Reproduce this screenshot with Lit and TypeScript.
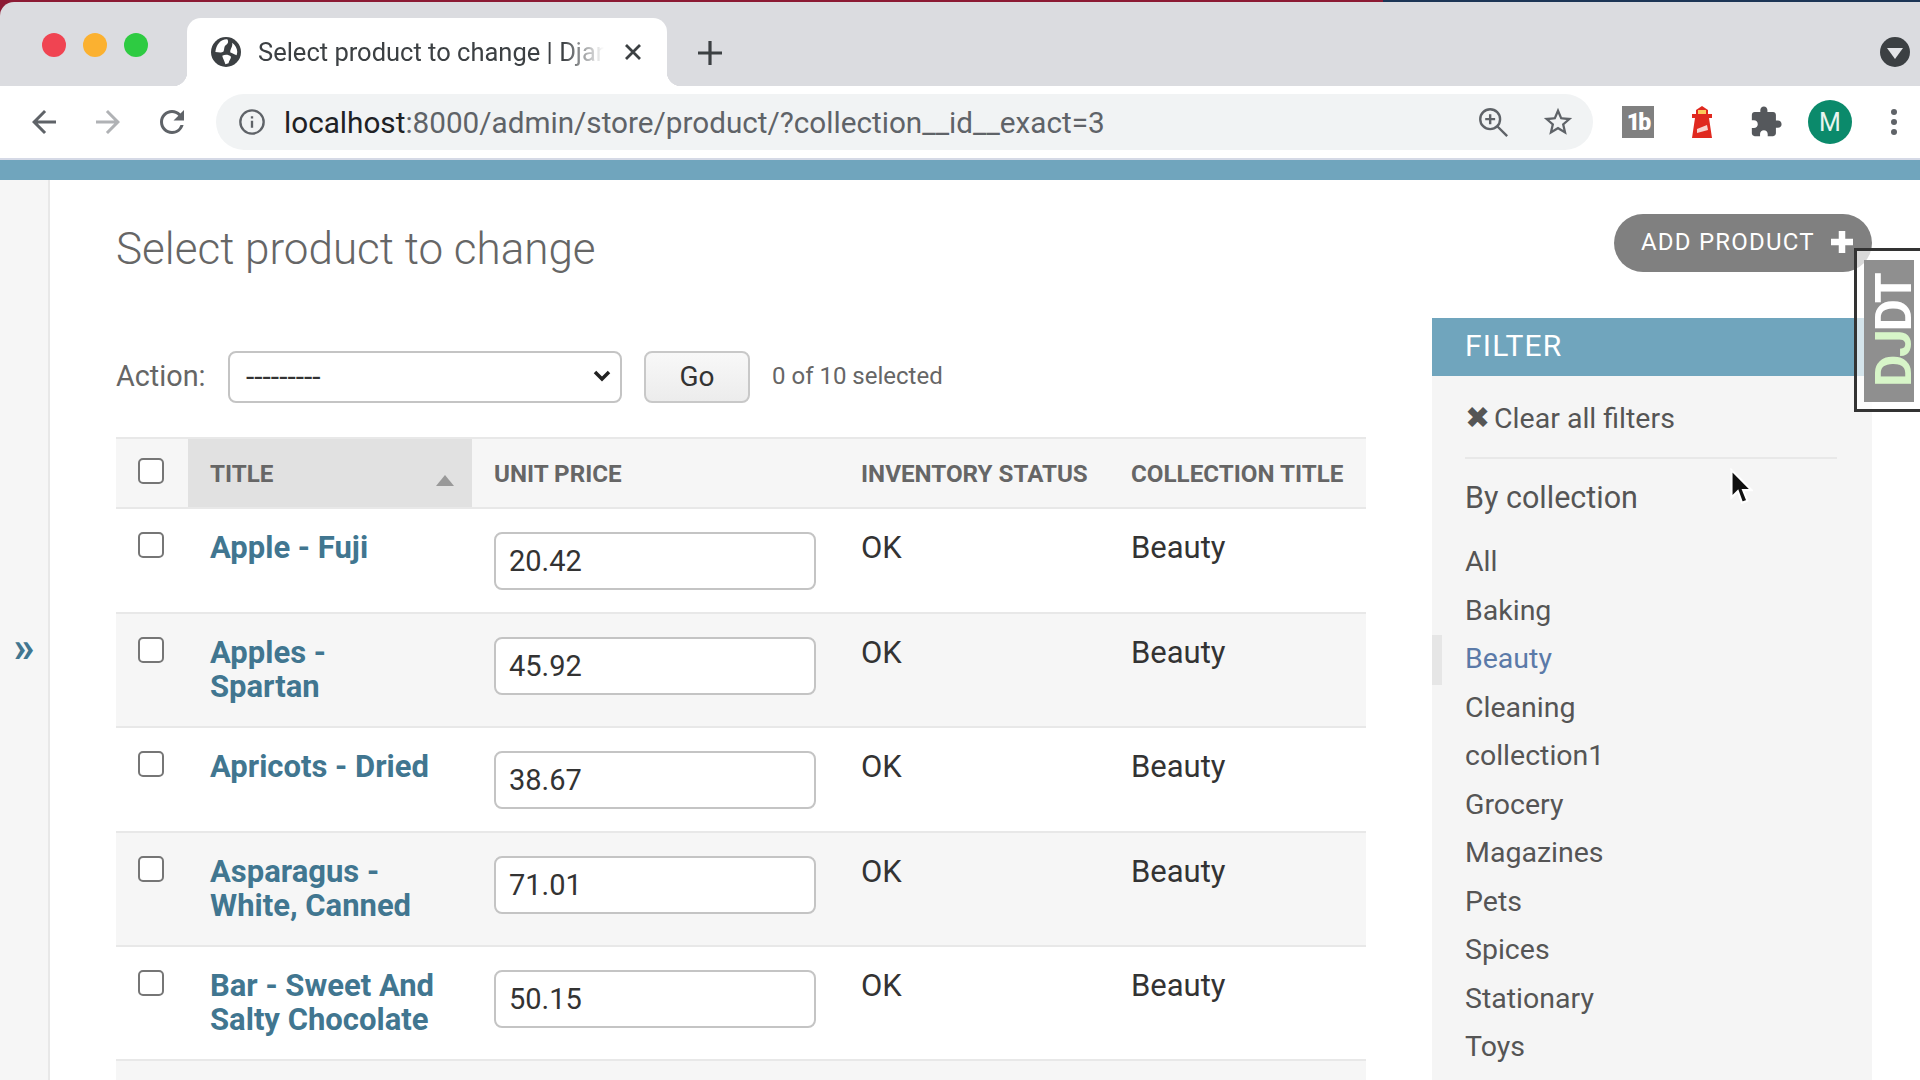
import { LitElement, html, css, svg } from 'lit';
import { customElement } from 'lit/decorators.js';

const PRODUCTS = [
  { title: 'Apple - Fuji', price: '20.42' },
  { title: 'Apples - Spartan', price: '45.92' },
  { title: 'Apricots - Dried', price: '38.67' },
  { title: 'Asparagus - White, Canned', price: '71.01' },
  { title: 'Bar - Sweet And Salty Chocolate', price: '50.15' },
  { title: '', price: '' },
];

const COLLECTIONS = [
  'All', 'Baking', 'Beauty', 'Cleaning', 'collection1', 'Grocery',
  'Magazines', 'Pets', 'Spices', 'Stationary', 'Toys',
];

const icon = (d: string, size: number, fill: string) => html`
  <svg width=${size} height=${size} viewBox="0 0 24 24" fill=${fill}>${svg`<path d=${d}></path>`}</svg>
`;

const BACK = 'M20 11H7.83l5.59-5.59L12 4l-8 8 8 8 1.41-1.41L7.83 13H20v-2z';
const FORWARD = 'M12 4l-1.41 1.41L16.17 11H4v2h12.17l-5.58 5.59L12 20l8-8z';
const RELOAD = 'M17.65 6.35A7.958 7.958 0 0 0 12 4c-4.42 0-7.99 3.58-7.99 8s3.57 8 7.99 8c3.73 0 6.84-2.55 7.73-6h-2.08A5.99 5.99 0 0 1 12 18c-3.31 0-6-2.69-6-6s2.69-6 6-6c1.66 0 3.14.69 4.22 1.78L13 11h7V4l-2.35 2.35z';
const STAR = 'M22 9.24l-7.19-.62L12 2 9.19 8.63 2 9.24l5.46 4.73L5.82 21 12 17.27 18.18 21l-1.63-7.03L22 9.24zM12 15.4l-3.76 2.27 1-4.28-3.32-2.88 4.38-.38L12 6.1l1.71 4.04 4.38.38-3.32 2.88 1 4.28L12 15.4z';
const PUZZLE = 'M20.5 11H19V7c0-1.1-.9-2-2-2h-4V3.5C13 2.12 11.88 1 10.5 1S8 2.12 8 3.5V5H4c-1.1 0-1.99.9-1.99 2v3.8H3.5c1.49 0 2.7 1.21 2.7 2.7s-1.21 2.7-2.7 2.7H2V20c0 1.1.9 2 2 2h3.8v-1.5c0-1.49 1.21-2.7 2.7-2.7 1.49 0 2.7 1.21 2.7 2.7V22H17c1.1 0 2-.9 2-2v-4h1.5c1.38 0 2.5-1.12 2.5-2.5S21.88 11 20.5 11z';

@customElement('app-root')
export class AppRoot extends LitElement {
  static styles = css`
    :host {
      display: block;
      width: 1920px;
      height: 1080px;
      overflow: hidden;
      position: relative;
      background: linear-gradient(to right, #8c1a34 1383px, #1b3556 1383px);
      font-family: Roboto, 'Liberation Sans', sans-serif;
      color: #333;
    }

    .tabstrip {
      height: 84px;
      margin-top: 2px;
      background: #dbdce0;
      border-top-left-radius: 14px;
      display: flex;
      align-items: flex-end;
    }

    .lights {
      width: 187px;
      height: 68px;
      flex: none;
      display: flex;
      gap: 17px;
      padding: 15px 0 0 42px;
      box-sizing: border-box;
    }

    .lights span {
      width: 24px;
      height: 24px;
      border-radius: 50%;
    }

    .tab {
      width: 480px;
      height: 68px;
      flex: none;
      position: relative;
      background: #fff;
      border-radius: 14px 14px 0 0;
      display: flex;
      align-items: center;
      padding: 0 22px 0 24px;
      box-sizing: border-box;
      gap: 17px;
      font-size: 25.5px;
      color: #3c4043;
    }

    .tab::before,
    .tab::after {
      content: '';
      position: absolute;
      bottom: 0;
      width: 14px;
      height: 14px;
    }

    .tab::before {
      left: -14px;
      background: radial-gradient(circle at 0 0, transparent 14px, #fff 14.5px);
    }

    .tab::after {
      right: -14px;
      background: radial-gradient(circle at 100% 0, transparent 14px, #fff 14.5px);
    }

    .tab-title {
      flex: 1;
      white-space: nowrap;
      overflow: hidden;
      -webkit-mask-image: linear-gradient(to right, #000 88%, transparent 100%);
      mask-image: linear-gradient(to right, #000 88%, transparent 100%);
    }

    .tab svg {
      flex: none;
    }

    .newtab {
      display: flex;
      margin: 0 0 17px 27px;
    }

    .strip-end {
      margin: 0 10px 19px auto;
      width: 30px;
      height: 30px;
      border-radius: 50%;
      background: #3c4043;
      display: flex;
      align-items: center;
      justify-content: center;
    }

    .strip-end i {
      border: 8px solid transparent;
      border-top: 11px solid #e4e5e8;
      border-bottom: 0;
      margin-top: 2px;
    }

    .toolbar {
      height: 72px;
      background: #fff;
      border-bottom: 2px solid #d5d9e6;
      display: flex;
      align-items: center;
      padding: 0 0 0 26px;
    }

    .nav {
      display: flex;
      width: 190px;
      flex: none;
      gap: 28px;
    }

    .omnibox {
      width: 1377px;
      height: 56px;
      flex: none;
      border-radius: 28px;
      background: #f1f3f4;
      display: flex;
      align-items: center;
      padding: 0 18px 0 22px;
      box-sizing: border-box;
      font-size: 29.7px;
      color: #5f6368;
    }

    .url {
      margin-left: 18px;
      flex: 1;
      white-space: nowrap;
    }

    .url b {
      font-weight: 400;
      color: #202124;
    }

    .omni-actions {
      display: flex;
      gap: 31px;
      align-items: center;
    }

    .extensions {
      display: flex;
      margin-left: 13px;
    }

    .ext {
      width: 64px;
      display: flex;
      align-items: center;
      justify-content: center;
    }

    .tb {
      width: 32px;
      height: 32px;
      background: #808080;
      color: #fff;
      font-size: 23px;
      font-weight: 900;
      letter-spacing: -2px;
      display: flex;
      align-items: center;
      justify-content: center;
    }

    .avatar {
      width: 44px;
      height: 44px;
      border-radius: 50%;
      background: #0b8a6b;
      color: #e8f5f0;
      font-size: 25px;
      display: flex;
      align-items: center;
      justify-content: center;
    }

    .dots {
      display: flex;
      flex-direction: column;
      gap: 4px;
    }

    .dots i {
      width: 6px;
      height: 6px;
      border-radius: 50%;
      background: #5f6368;
    }

    .site-header {
      height: 20px;
      background: #70a5bd;
    }

    .page {
      height: 900px;
      background: #fff;
      display: flex;
    }

    .nav-toggle {
      width: 48px;
      flex: none;
      border-right: 2px solid #e8e8e8;
      background: #f6f6f6;
      display: flex;
      align-items: center;
      justify-content: center;
      font-size: 42px;
      font-weight: 700;
      color: #417690;
    }

    .nav-toggle span {
      margin-top: 34px;
    }

    .content {
      flex: 1;
      padding: 34px 48px 0 66px;
      min-width: 0;
    }

    .content-head {
      height: 58px;
      display: flex;
      justify-content: space-between;
      margin-bottom: 46px;
    }

    h1 {
      margin: 0;
      font-weight: 300;
      font-size: 44px;
      line-height: 70px;
      color: #666;
    }

    .add-btn {
      width: 258px;
      height: 58px;
      border-radius: 29px;
      box-sizing: border-box;
      background: #808080;
      color: #fff;
      display: flex;
      align-items: center;
      padding: 0 0 2px 27px;
      gap: 15px;
      font-size: 24px;
      font-weight: 400;
      letter-spacing: 1.2px;
    }

    .columns {
      display: grid;
      grid-template-columns: 1250px 440px;
      column-gap: 66px;
    }

    .actions {
      height: 52px;
      margin: 33px 0 34px;
      display: flex;
      align-items: center;
    }

    .actions label {
      font-size: 28.8px;
      color: #666;
      width: 112px;
      padding-bottom: 2px;
    }

    .select-wrap {
      position: relative;
      width: 394px;
      height: 52px;
    }

    select {
      width: 100%;
      height: 100%;
      appearance: none;
      border: 2px solid #c4c4c4;
      border-radius: 8px;
      background: #fff;
      padding: 0 16px 2px;
      font: 400 30px Roboto, sans-serif;
      color: #333;
    }

    .select-wrap svg {
      position: absolute;
      right: 10px;
      top: 15px;
    }

    .go {
      width: 106px;
      height: 52px;
      margin: 0 22px;
      padding: 0 0 2px;
      border: 2px solid #c8c8c8;
      border-radius: 8px;
      background: linear-gradient(#f8f8f8, #ececec);
      font: 400 28px Roboto, sans-serif;
      color: #333;
    }

    .counter {
      font-size: 24px;
      color: #666;
      padding-bottom: 2px;
    }

    table {
      width: 1250px;
      table-layout: fixed;
      border-collapse: collapse;
    }

    th {
      height: 70px;
      padding: 2px 22px 0;
      box-sizing: border-box;
      text-align: left;
      background: #f6f6f6;
      border-top: 2px solid #e8e8e8;
      border-bottom: 2px solid #e8e8e8;
      font-size: 24.2px;
      font-weight: 700;
      color: #666;
      white-space: nowrap;
      position: relative;
    }

    th.sorted {
      background: #e1e1e1;
    }

    th.check {
      padding: 0 0 4px 22px;
    }

    .sort-arrow {
      position: absolute;
      right: 18px;
      top: 36px;
      border: 9px solid transparent;
      border-bottom: 11px solid #999;
      border-top: 0;
    }

    td {
      padding: 22px;
      vertical-align: top;
      border-bottom: 2px solid #e8e8e8;
      font-size: 31px;
      line-height: 34px;
      color: #333;
    }

    tr:nth-child(even) td {
      background: #f6f6f6;
    }

    td a {
      display: block;
      font-weight: 700;
      color: #417690;
      padding-right: 14px;
    }

    td.price {
      padding-top: 23px;
    }

    td.price input {
      width: 322px;
      height: 58px;
      box-sizing: border-box;
      border: 2px solid #c4c4c4;
      border-radius: 8px;
      padding: 0 13px;
      font: 400 29px Roboto, sans-serif;
      color: #333;
      background: #fff;
    }

    input[type='checkbox'] {
      appearance: none;
      display: block;
      width: 26px;
      height: 26px;
      margin: 0;
      border: 2px solid #767676;
      border-radius: 5px;
      background: #fff;
    }

    td.check {
      padding: 23px 0 0 22px;
    }

    .filter {
      height: 900px;
      background: #f5f5f5;
      position: relative;
      color: #555;
    }

    .filter h2 {
      margin: 0;
      height: 58px;
      line-height: 56px;
      padding-left: 33px;
      background: #70a5bd;
      color: #fff;
      font-size: 30px;
      font-weight: 400;
      letter-spacing: 1.2px;
    }

    .clear {
      margin: 0 35px 0 33px;
      height: 83px;
      box-sizing: border-box;
      padding-top: 26px;
      line-height: 34px;
      font-size: 28.5px;
      border-bottom: 2px solid #e8e8e8;
    }

    .clear span {
      font-size: 30px;
      line-height: 0;
      margin-right: -3px;
    }

    .filter h3 {
      margin: 22px 33px 23px;
      font-size: 30.5px;
      font-weight: 400;
      line-height: 34px;
    }

    .filter ul {
      list-style: none;
      margin: 0;
      padding: 0;
    }

    .filter li {
      height: 48.5px;
      line-height: 48px;
      padding-left: 33px;
      font-size: 28.5px;
      position: relative;
    }

    .filter li.selected {
      color: #5b7aa8;
    }

    .filter li.selected::before {
      content: '';
      position: absolute;
      left: 0;
      top: 0;
      width: 10px;
      height: 50px;
      background: #e6e6e6;
    }

    .djdt {
      position: absolute;
      left: 1854px;
      top: 248px;
      width: 66px;
      height: 164px;
      box-sizing: border-box;
      border: 3px solid #333;
      border-right: 0;
      background: rgba(255, 255, 255, 0.7);
      padding: 9px 0 7px 7px;
    }

    .djdt div {
      height: 100%;
      background: #8f8f8f;
      display: flex;
      align-items: center;
      justify-content: center;
      writing-mode: vertical-rl;
      transform: rotate(180deg);
      font-size: 50px;
      font-weight: 700;
      letter-spacing: -2.5px;
      line-height: 50px;
      color: #fff;
    }

    .djdt span {
      display: inline-block;
      transform: translateX(-5px);
    }

    .djdt em {
      font-style: normal;
      color: #d7f5c8;
    }

    .cursor {
      position: absolute;
      left: 1729px;
      top: 468px;
    }
  `;

  render() {
    return html`
      <div class="tabstrip">
        <div class="lights">
          <span style="background:#f04452"></span>
          <span style="background:#fbb130"></span>
          <span style="background:#2ecb42"></span>
        </div>
        <div class="tab">
          <svg width="30" height="30" viewBox="0 0 24 24">
            <circle cx="12" cy="12" r="12" fill="#3c4043"></circle>
            <path d="M3.5 12C6 12 8 13 10 11.5 11 9.500 10 7.500 12.500 6 14 5 14 3 13 1.800 8 1.500 4 6 3.500 12z" fill="#fff"></path>
            <path d="M9 15c2.500-1.200 5-1 7 .8 0 1.700-1.500 2.700-2 5.200l-2.500.8C11 19.500 9.500 17.500 9 15z" fill="#fff"></path>
            <path d="M17 4.500c2.500 1.800 4 4.500 4 7.500l-.5 2.500c-2-1-3.500-1.500-5-2.200-.5-2.500 2-4.300 1.500-7.800z" fill="#fff"></path>
          </svg>
          <span class="tab-title">Select product to change | Django</span>
          <svg width="24" height="24" viewBox="0 0 24 24"><path d="M5 5l14 14M19 5L5 19" stroke="#3c4043" stroke-width="2.800" fill="none"></path></svg>
        </div>
        <div class="newtab">
          <svg width="32" height="32" viewBox="0 0 24 24"><path d="M12 3v18M3 12h18" stroke="#3c4043" stroke-width="2.400"></path></svg>
        </div>
        <div class="strip-end"><i></i></div>
      </div>

      <div class="toolbar">
        <div class="nav">
          ${icon(BACK, 36, '#5f6368')}
          ${icon(FORWARD, 36, '#b0b2b5')}
          ${icon(RELOAD, 36, '#5f6368')}
        </div>
        <div class="omnibox">
          <svg width="28" height="28" viewBox="0 0 24 24">
            <circle cx="12" cy="12" r="10" fill="none" stroke="#5f6368" stroke-width="2"></circle>
            <path d="M11 11h2v6h-2zM11 7h2v2h-2z" fill="#5f6368"></path>
          </svg>
          <span class="url"><b>localhost</b>:8000/admin/store/product/?collection__id__exact=3</span>
          <div class="omni-actions">
            <svg width="34" height="34" viewBox="0 0 24 24" fill="none" stroke="#5f6368" stroke-width="1.700">
              <circle cx="10" cy="10" r="7"></circle>
              <path d="M15 15l7 7M10 6.500v7M6.500 10h7"></path>
            </svg>
            ${icon(STAR, 34, '#5f6368')}
          </div>
        </div>
        <div class="extensions">
          <div class="ext"><div class="tb">1b</div></div>
          <div class="ext">
            <svg width="22" height="32" viewBox="0 0 22 32">
              <path d="M11 0l6 4v4h4v4h-3l3 20H1l3-20H1V8h4V4z" fill="#e0291f"></path>
              <rect x="7" y="4" width="8" height="4" fill="#fbc95a"></rect>
              <path d="M6 23l10-4 1 5-11 3z" fill="#f7d3cf"></path>
            </svg>
          </div>
          <div class="ext">${icon(PUZZLE, 34, '#55585c')}</div>
          <div class="ext"><div class="avatar">M</div></div>
          <div class="ext"><div class="dots"><i></i><i></i><i></i></div></div>
        </div>
      </div>

      <div class="site-header"></div>

      <div class="page">
        <div class="nav-toggle"><span>»</span></div>
        <div class="content">
          <div class="content-head">
            <h1>Select product to change</h1>
            <div class="add-btn">
              ADD PRODUCT
              <svg width="24" height="24" viewBox="0 0 24 24"><path d="M12 1v22M1 12h22" stroke="#fff" stroke-width="6.500"></path></svg>
            </div>
          </div>
          <div class="columns">
            <div class="results">
              <div class="actions">
                <label>Action:</label>
                <div class="select-wrap">
                  <select><option>---------</option></select>
                  <svg width="20" height="20" viewBox="0 0 20 20"><path d="M3 6l7 7 7-7" fill="none" stroke="#222" stroke-width="3.500"></path></svg>
                </div>
                <button class="go">Go</button>
                <span class="counter">0 of 10 selected</span>
              </div>
              <table>
                <colgroup>
                  <col style="width:72px" />
                  <col style="width:284px" />
                  <col style="width:367px" />
                  <col style="width:270px" />
                  <col style="width:257px" />
                </colgroup>
                <thead>
                  <tr>
                    <th class="check"><input type="checkbox" /></th>
                    <th class="sorted">TITLE<span class="sort-arrow"></span></th>
                    <th>UNIT PRICE</th>
                    <th>INVENTORY STATUS</th>
                    <th>COLLECTION TITLE</th>
                  </tr>
                </thead>
                <tbody>
                  ${PRODUCTS.map(
                    (p) => html`
                      <tr>
                        <td class="check">${p.title ? html`<input type="checkbox" />` : ''}</td>
                        <td><a>${p.title}</a></td>
                        <td class="price">${p.title ? html`<input type="text" .value=${p.price} />` : ''}</td>
                        <td>${p.title ? 'OK' : ''}</td>
                        <td>${p.title ? 'Beauty' : ''}</td>
                      </tr>
                    `,
                  )}
                </tbody>
              </table>
            </div>
            <aside class="filter">
              <h2>FILTER</h2>
              <div class="clear"><span>✖</span> Clear all filters</div>
              <h3>By collection</h3>
              <ul>
                ${COLLECTIONS.map(
                  (c) => html`<li class=${c === 'Beauty' ? 'selected' : ''}>${c}</li>`,
                )}
              </ul>
            </aside>
          </div>
        </div>
      </div>

      <div class="djdt"><div><span><em>DJ</em>DT</span></div></div>

      <svg class="cursor" width="24" height="38" viewBox="0 0 22 36">
        <path d="M2 2v26l6-6 4 11 5-2-4-10h8z" fill="#111" stroke="#fff" stroke-width="2"></path>
      </svg>
    `;
  }
}
